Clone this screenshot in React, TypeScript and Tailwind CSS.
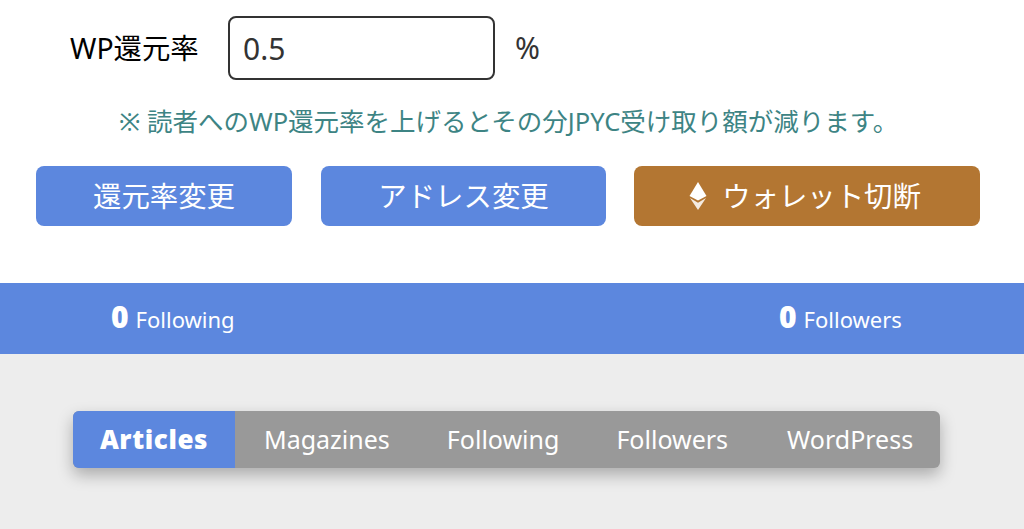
import React from 'react';

const EthIcon = () => (
  <svg viewBox="0 0 18 28" className="w-[18px] h-[28px]" fill="#ffffff">
    <path d="M9 0 L17.5 14 L9 18.6 L0.5 14 Z" />
    <path d="M9 20.8 L17 16 L9 28 L1 16 Z" opacity="0.85" />
  </svg>
);

const tabs = ['Magazines', 'Following', 'Followers'];

export default function App() {
  return (
    <div className="w-[1024px] h-[529px] overflow-hidden bg-white flex flex-col font-['Noto_Sans','Noto_Sans_CJK_JP',sans-serif]">
      <div className="h-[283px] pt-4">
        {/* rate input */}
        <div className="flex items-center h-16 pl-[70px]">
          <label className="w-[158px] text-[28.4px] text-black">WP還元率</label>
          <div className="w-[267px] h-16 rounded-lg border-2 border-[#333333] flex items-center pl-[13px] text-[30px] text-[#333333]">0.5</div>
          <span className="ml-5 text-[30px] leading-none text-[#333333]">%</span>
        </div>

        <p className="mt-6 h-[34px] leading-[34px] pl-[119px] text-[25.5px] whitespace-nowrap text-[#3d8484]">※ 読者へのWP還元率を上げるとその分JPYC受け取り額が減ります。</p>

        {/* buttons */}
        <div className="mt-7 flex pl-9 text-white text-[28.4px]">
          <button className="w-[256px] h-[60px] rounded-lg bg-[#5c87de]">還元率変更</button>
          <button className="ml-[29px] w-[285px] h-[60px] rounded-lg bg-[#5c87de]">アドレス変更</button>
          <button className="ml-7 w-[346px] h-[60px] pr-1 rounded-lg bg-[#b37632] flex items-center justify-center gap-[15px]">
            <EthIcon />
            <span>ウォレット切断</span>
          </button>
        </div>
      </div>

      {/* follow counts */}
      <div className="h-[71px] bg-[#5c87de] text-white flex items-center text-[22px]">
        <div className="w-[667px] pl-[111px] flex items-baseline gap-[7px]">
          <span className="font-black text-[30px] leading-none">0</span>
          <span>Following</span>
        </div>
        <div className="flex items-baseline gap-[7px] pl-[112px]">
          <span className="font-black text-[30px] leading-none">0</span>
          <span>Followers</span>
        </div>
      </div>

      {/* tabs */}
      <div className="flex-1 bg-[#ededed] pt-[57px] pl-[73px]">
        <div className="w-[867px] h-[57px] flex rounded-md overflow-hidden bg-[#999999] text-white text-[25px] shadow-[0_7px_16px_rgba(0,0,0,0.28)]">
          <div className="w-[162px] bg-[#5c87de] flex items-center justify-center font-black text-[26px] tracking-[0.6px]">Articles</div>
          <div className="flex-1 flex items-center gap-[57px] pl-[29px]">
            {tabs.map((t) => (
              <span key={t}>{t}</span>
            ))}
            <span className="ml-[2px]">WordPress</span>
          </div>
        </div>
      </div>
    </div>
  );
}
